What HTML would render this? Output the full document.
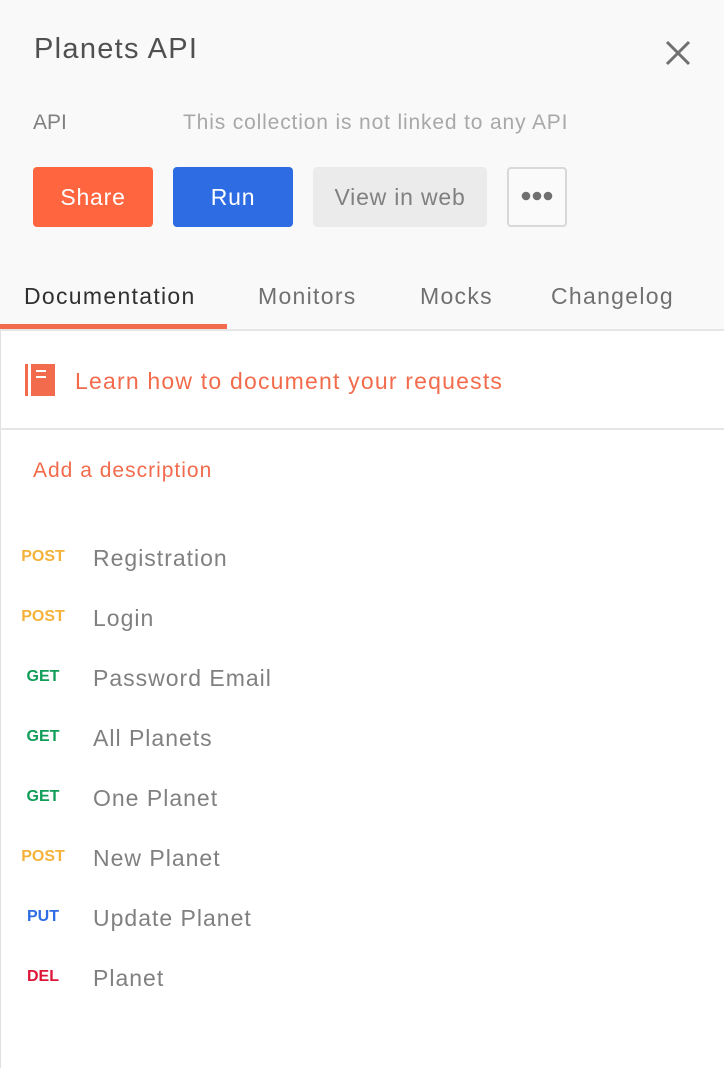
<!DOCTYPE html>
<html><head><meta charset="utf-8"><style>
*{margin:0;padding:0;box-sizing:border-box}
body{width:724px;height:1068px;background:#fff;font-family:"Liberation Sans",sans-serif;position:relative;overflow:hidden}
.hdr{position:absolute;left:0;top:0;width:724px;height:330px;background:#f9f9f9}
.a{position:absolute;white-space:nowrap}
.btn{position:absolute;top:167px;height:60px;border-radius:4px;font-size:23px;line-height:60px;text-align:center;letter-spacing:0.8px}
.m{position:absolute;left:0;width:86px;text-align:center;font-weight:bold;font-size:16px}
.n{position:absolute;left:93px;font-size:23px;color:#808080;letter-spacing:1px}
.t{font-size:23px;letter-spacing:1.3px}
</style></head><body>
<div class="hdr"></div>
<div class="a" style="left:34px;top:33px;font-size:29px;color:#505050;letter-spacing:1.3px">Planets API</div>
<svg class="a" style="left:665px;top:40px" width="26" height="26" viewBox="0 0 26 26"><path d="M2 2L24 24M24 2L2 24" stroke="#707070" stroke-width="3"/></svg>
<div class="a" style="left:33px;top:111px;font-size:21px;color:#808080">API</div>
<div class="a" style="left:183px;top:111px;font-size:21px;color:#a8a8a8;letter-spacing:0.85px">This collection is not linked to any API</div>
<div class="btn" style="left:33px;width:120px;background:#ff6640;color:#fff">Share</div>
<div class="btn" style="left:173px;width:120px;background:#2d6ce3;color:#fff">Run</div>
<div class="btn" style="left:313px;width:174px;background:#ebebeb;color:#808080">View in web</div>
<div class="btn" style="left:507px;width:60px;border:2px solid #d8d8d8;background:#fafafa;line-height:50px"><svg width="36" height="12" viewBox="0 0 36 12"><circle cx="7" cy="6" r="4.3" fill="#707070"/><circle cx="18" cy="6" r="4.3" fill="#707070"/><circle cx="29" cy="6" r="4.3" fill="#707070"/></svg></div>
<div class="a t" style="left:24px;top:283px;color:#303030">Documentation</div>
<div class="a t" style="left:258px;top:283px;color:#707070">Monitors</div>
<div class="a t" style="left:420px;top:283px;color:#707070">Mocks</div>
<div class="a t" style="left:551px;top:283px;color:#707070">Changelog</div>
<div class="a" style="left:0;top:324px;width:227px;height:5px;background:#f26b4c"></div>
<div class="a" style="left:0;top:329px;width:724px;height:2px;background:#e6e6e6"></div>
<div class="a" style="left:0;top:331px;width:1px;height:737px;background:#e0e0e0"></div>
<svg class="a" style="left:25px;top:364px" width="30" height="32" viewBox="0 0 30 32"><rect x="0" y="0" width="3" height="32" fill="#f26b4c"/><rect x="6" y="0" width="24" height="32" fill="#f26b4c"/><rect x="11" y="6" width="10" height="2" fill="#fff"/><rect x="11" y="12" width="10" height="2" fill="#fff"/></svg>
<div class="a" style="left:75px;top:368px;font-size:23px;color:#f26b4c;letter-spacing:1.2px">Learn how to document your requests</div>
<div class="a" style="left:0;top:428px;width:724px;height:2px;background:#e6e6e6"></div>
<div class="a" style="left:33px;top:459px;font-size:21px;color:#f26b4c;letter-spacing:1px">Add a description</div>
<div class="m" style="top:548px;color:#f4b23a">POST</div><div class="n" style="top:545px">Registration</div>
<div class="m" style="top:608px;color:#f4b23a">POST</div><div class="n" style="top:605px">Login</div>
<div class="m" style="top:668px;color:#0f9d58">GET</div><div class="n" style="top:665px">Password Email</div>
<div class="m" style="top:728px;color:#0f9d58">GET</div><div class="n" style="top:725px">All Planets</div>
<div class="m" style="top:788px;color:#0f9d58">GET</div><div class="n" style="top:785px">One Planet</div>
<div class="m" style="top:848px;color:#f4b23a">POST</div><div class="n" style="top:845px">New Planet</div>
<div class="m" style="top:908px;color:#2d6ce3">PUT</div><div class="n" style="top:905px">Update Planet</div>
<div class="m" style="top:968px;color:#dd1638">DEL</div><div class="n" style="top:965px">Planet</div>
</body></html>
